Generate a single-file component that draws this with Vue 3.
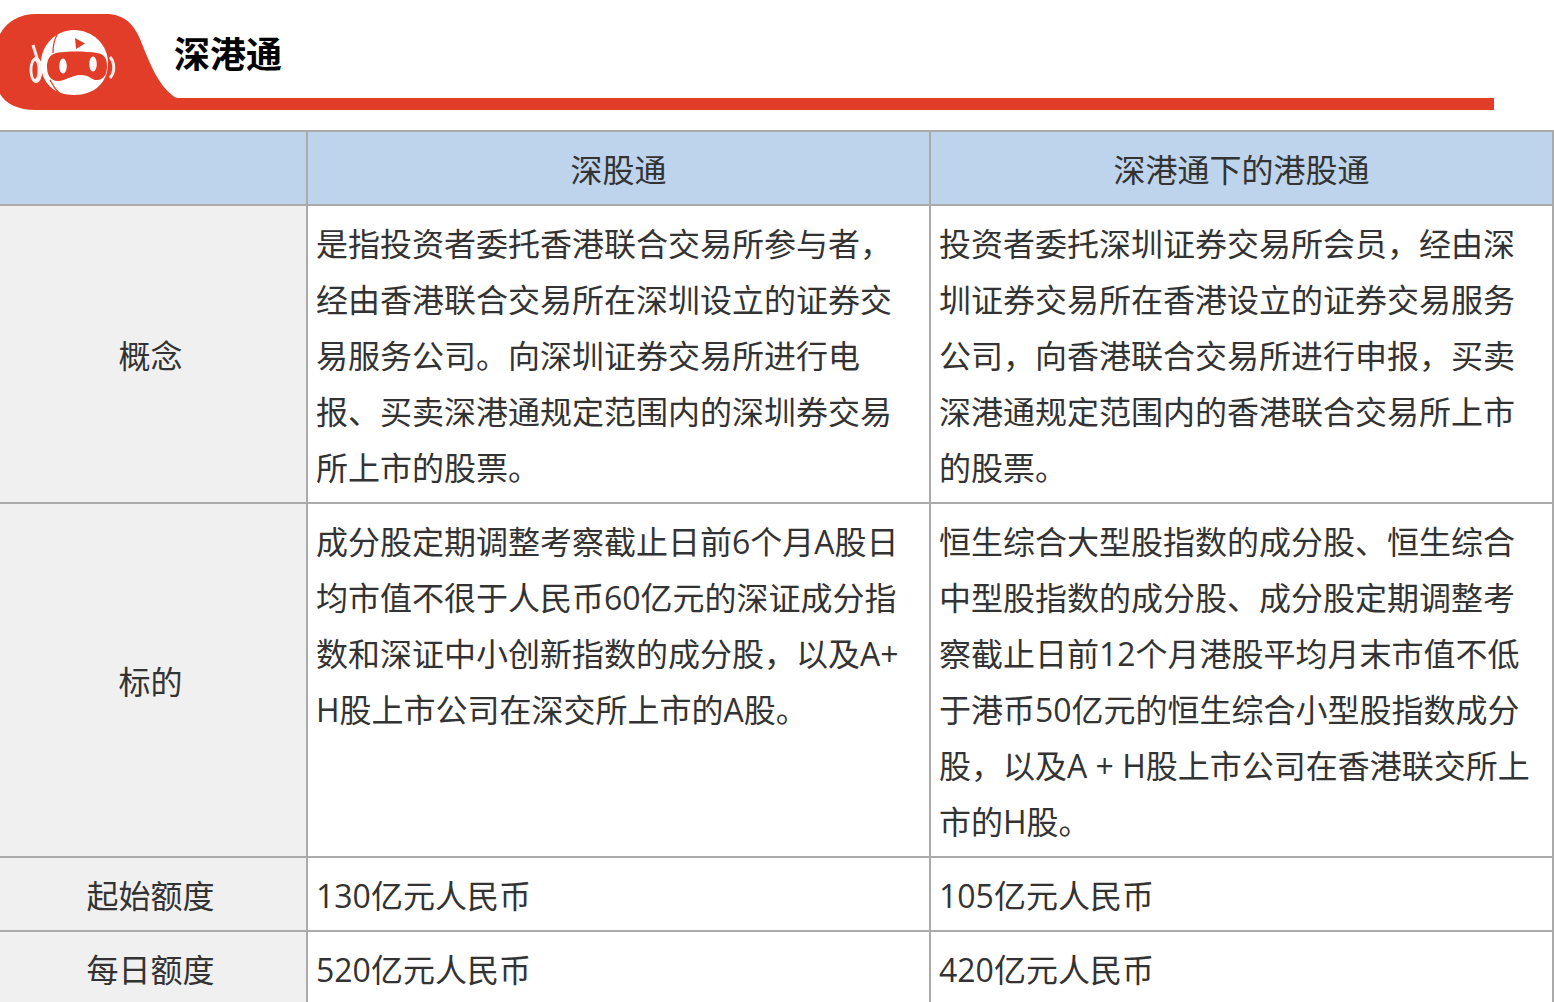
<script setup>
const rows = [
  {
    head: '概念',
    a: '是指投资者委托香港联合交易所参与者，经由香港联合交易所在深圳设立的证券交易服务公司。向深圳证券交易所进行电报、买卖深港通规定范围内的深圳券交易所上市的股票。',
    b: '投资者委托深圳证券交易所会员，经由深圳证券交易所在香港设立的证券交易服务公司，向香港联合交易所进行申报，买卖深港通规定范围内的香港联合交易所上市的股票。'
  },
  {
    head: '标的',
    a: '成分股定期调整考察截止日前6个月A股日均市值不很于人民币60亿元的深证成分指数和深证中小创新指数的成分股，以及A+H股上市公司在深交所上市的A股。',
    b: '恒生综合大型股指数的成分股、恒生综合中型股指数的成分股、成分股定期调整考察截止日前12个月港股平均月末市值不低于港币50亿元的恒生综合小型股指数成分股，以及A + H股上市公司在香港联交所上市的H股。'
  },
  { head: '起始额度', a: '130亿元人民币', b: '105亿元人民币' },
  { head: '每日额度', a: '520亿元人民币', b: '420亿元人民币' }
]
</script>

<template>
  <div class="page">
    <header class="banner">
      <svg class="tab" width="178" height="97" viewBox="0 13 178 97">
        <path fill="#e23d28" d="M0 34C7 21 20 14 36 14H106C124 14 135 24 142 44C150 64 158 84 172 95C174 97 176 98 178 98V110H36C18 110 6 104 0 94Z" />
        <ellipse cx="36" cy="70" rx="6.5" ry="13" fill="#fff" fill-opacity=".92" />
        <ellipse cx="35" cy="70" rx="2.6" ry="9" fill="#e23d28" />
        <path d="M33 45l4 13" stroke="#fff" stroke-opacity=".9" stroke-width="3" fill="none" />
        <path d="M110 57c5 6 5 15 0 21" stroke="#fff" stroke-opacity=".9" stroke-width="3" fill="none" />
        <path fill="#fff" d="M74 30C93 30 108 45 108 63C108 83 94 95 74 95C54 95 41 83 41 63C41 45 56 30 74 30Z" />
        <path fill="none" stroke="#e23d28" stroke-width="1.3" d="M53 53C53 46 54 40 57 35M50 80C53 86 56 90 60 94" />
        <path fill="#e23d28" d="M75 38L85 43.5L76 49Z" />
        <path fill="#e23d28" d="M56 53C66 51 86 51 97 53C104 54 107 58 107 66C107 74 104 79 98 80C92 81 90 75 81 75C71 75 66 81 58 81C50 81 47 74 47 67C47 60 49 55 56 53Z" />
        <ellipse cx="63" cy="66" rx="3.8" ry="7.5" fill="#fff" />
        <ellipse cx="93" cy="64" rx="3.8" ry="7.5" fill="#fff" />
      </svg>
      <div class="bar"><h1 class="title">深港通</h1></div>
    </header>
    <table class="grid">
      <colgroup>
        <col class="c1" />
        <col class="c2" />
        <col class="c3" />
      </colgroup>
      <thead>
        <tr>
          <th></th>
          <th>深股通</th>
          <th>深港通下的港股通</th>
        </tr>
      </thead>
      <tbody>
        <tr v-for="r in rows" :key="r.head">
          <th class="side">{{ r.head }}</th>
          <td>{{ r.a }}</td>
          <td>{{ r.b }}</td>
        </tr>
      </tbody>
    </table>
  </div>
</template>

<style>
html, body { margin: 0; background: #fff; overflow: hidden; }
</style>

<style scoped>
.page {
  width: 1554px;
  overflow: hidden;
  font-family: "Open Sans", "Noto Sans CJK SC", sans-serif;
  padding-top: 13px;
}
.banner {
  display: flex;
  width: 1494px;
  height: 97px;
}
.tab { display: block; flex: none; }
.bar {
  flex: 1;
  box-sizing: border-box;
  height: 97px;
  border-bottom: 12px solid #e23d28;
  display: flex;
  align-items: center;
  padding-bottom: 7px;
}
.title {
  margin: 0 0 0 -4px;
  font-family: "Noto Sans CJK SC", sans-serif;
  font-size: 36px;
  font-weight: 700;
  line-height: 50px;
  color: #000;
}
.grid {
  margin: 20px 0 0 -7px;
  width: 1559px;
  table-layout: fixed;
  border-collapse: collapse;
  font-size: 32px;
  line-height: 56px;
  color: #333;
}
.c1 { width: 313px; }
.c2, .c3 { width: 623px; }
th, td {
  border: 2px solid #aaa;
  padding: 10px 8px 6px;
  font-weight: 400;
  word-break: break-all;
}
thead th { background: #bdd4ec; text-align: center; }
td { text-align: left; vertical-align: top; }
.side { background: #f0f0f0; text-align: center; vertical-align: middle; }
</style>
